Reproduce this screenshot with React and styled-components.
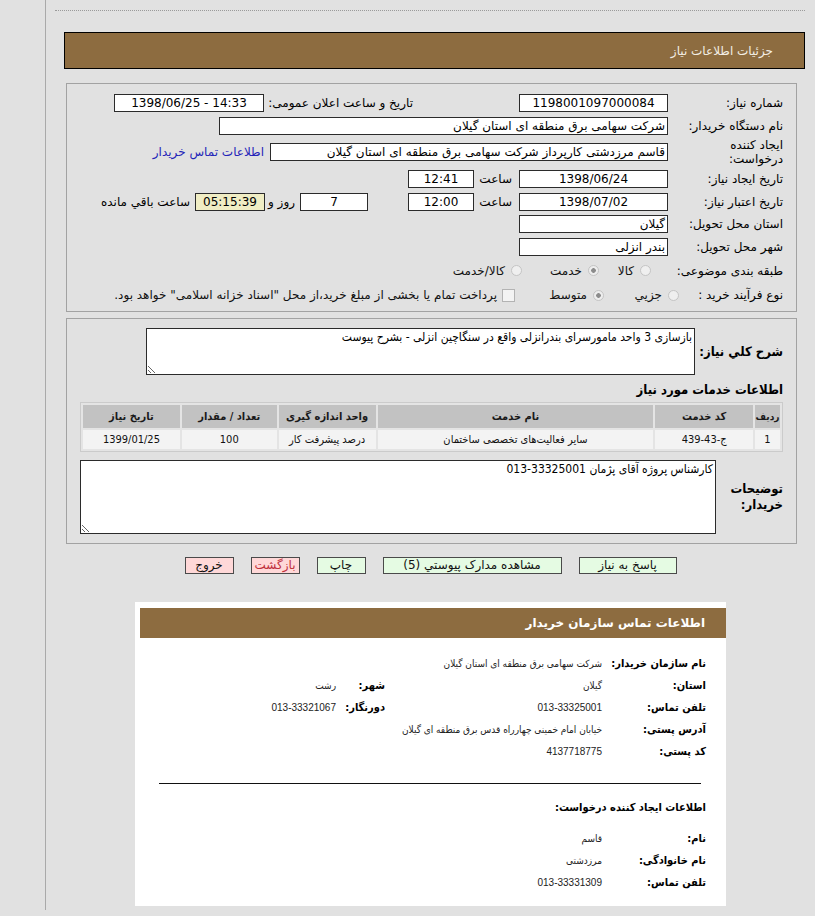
import React from "react";
import styled, { createGlobalStyle } from "styled-components";

const GlobalStyle = createGlobalStyle`
  html, body {
    margin: 0;
    padding: 0;
    background: #e1e1e1;
  }
  body {
    font-family: "DejaVu Sans", Tahoma, sans-serif;
    font-size: 12px;
    color: #000;
  }
`;

const Page = styled.div`
  display: flex;
  height: 916px;
  overflow: hidden;
`;

const Gutter = styled.div`
  width: 45px;
  height: 910px;
  flex-shrink: 0;
  border-right: 1px solid #a9a9a9;
`;

const Main = styled.div`
  flex: 1;
  direction: rtl;
  display: flex;
  flex-direction: column;
`;

const DottedRule = styled.div`
  margin: 10px 10px 0 9px;
  border-top: 1px dotted #9a9a9a;
`;

const TitleBar = styled.div`
  margin: 21px 10px 0 18px;
  height: 35px;
  border: 1px solid #000;
  background: #8d6c40;
  color: #f3eee4;
  display: flex;
  align-items: center;
  padding-right: 31px;
  font-size: 12px;
`;

const Box = styled.div`
  margin: ${(p) => p.$top}px 18px 0 20px;
  border: 1px solid #a2a2a2;
  padding: ${(p) => p.$pad};
  display: flex;
  flex-direction: column;
`;

const Row = styled.div`
  display: flex;
  align-items: center;
  height: ${(p) => p.$h}px;
  margin-top: ${(p) => p.$top || 0}px;
`;

const Label = styled.div`
  width: ${(p) => p.$w || 115}px;
  flex-shrink: 0;
  white-space: nowrap;
  line-height: ${(p) => (p.$bold ? 16 : 14)}px;
  font-family: ${(p) =>
    p.$bold ? `"DejaVu Sans Condensed", "DejaVu Sans", sans-serif` : "inherit"};
  font-weight: ${(p) => (p.$bold ? "bold" : "normal")};
  font-size: ${(p) => (p.$bold ? 13 : 12)}px;
  margin-right: ${(p) => p.$mr || 0}px;
`;

const Field = styled.div`
  width: ${(p) => p.$w}px;
  height: 18px;
  box-sizing: border-box;
  border: 1px solid #2b2b2b;
  background: ${(p) => p.$bg || "#fff"};
  text-align: ${(p) => p.$align || "center"};
  direction: ${(p) => p.$dir || "rtl"};
  line-height: 16px;
  padding: 0 2px;
  margin-right: ${(p) => p.$mr || 0}px;
  white-space: nowrap;
  overflow: hidden;
  flex-shrink: 0;
`;

const Caption = styled.span`
  width: ${(p) => (p.$w ? `${p.$w}px` : "auto")};
  padding-right: ${(p) => p.$pr || 0}px;
  box-sizing: border-box;
  white-space: nowrap;
  flex-shrink: 0;
`;

const Link = styled.a`
  margin-right: 6px;
  color: #2424b8;
  text-decoration: none;
  white-space: nowrap;
`;

const Option = styled.label`
  display: flex;
  align-items: center;
  width: ${(p) => (p.$w ? `${p.$w}px` : "auto")};
  padding-right: ${(p) => p.$pr || 0}px;
  box-sizing: border-box;
  white-space: nowrap;
  flex-shrink: 0;
  color: #111;
`;

const Radio = styled.span`
  width: 11px;
  height: 11px;
  box-sizing: border-box;
  border-radius: 50%;
  border: 1px solid #c4c4c4;
  background: ${(p) =>
    p.$on
      ? "radial-gradient(circle, #8c8c8c 0 2px, #ededed 2.6px)"
      : "#efefef"};
  margin-left: 6px;
  flex-shrink: 0;
`;

const Check = styled.span`
  width: 13px;
  height: 13px;
  box-sizing: border-box;
  border: 1px solid #b3b3b3;
  background: #f3f3f3;
  margin-left: 5px;
  flex-shrink: 0;
`;

const TextBlock = styled.textarea`
  width: ${(p) => p.$w}px;
  height: ${(p) => p.$h}px;
  box-sizing: border-box;
  border: 1px solid #2b2b2b;
  background: #fff;
  font-family: "DejaVu Sans Condensed", "DejaVu Sans", sans-serif;
  font-size: 12px;
  line-height: 15px;
  padding: 1px 2px;
  margin: 0;
  direction: rtl;
  flex-shrink: 0;
  outline: none;
`;

const SectionHead = styled.div`
  margin-top: 8px;
  height: 14px;
  line-height: 14px;
  font-family: "DejaVu Sans Condensed", "DejaVu Sans", sans-serif;
  font-weight: bold;
  font-size: 13px;
`;

const Table = styled.table`
  margin-top: 5px;
  width: 703px;
  border: 1px solid #cbcbcb;
  border-spacing: 2px;
  background: #e4e4e4;
  font-family: "DejaVu Sans Condensed", "DejaVu Sans", sans-serif;
  font-size: 11px;
`;

const Th = styled.th`
  width: ${(p) => p.$w}px;
  height: 23px;
  padding: 0;
  background: #c2c2c2;
  font-weight: bold;
  font-size: ${(p) => (p.$w < 40 ? 10 : 11)}px;
  color: #1a1a1a;
  white-space: nowrap;
`;

const Td = styled.td`
  height: 19px;
  padding: 0;
  background: #f3f3f3;
  text-align: center;
  color: #111;
`;

const ButtonBar = styled.div`
  display: flex;
  justify-content: center;
  gap: 17px;
  margin-top: 13px;
`;

const Button = styled.button`
  width: ${(p) => p.$w}px;
  height: 17px;
  padding: 0;
  border: 1px solid #4a4a4a;
  background: ${(p) => (p.$tone === "red" ? "#ffd8d8" : "#e5fbe3")};
  color: ${(p) => (p.$accent ? "#c0303c" : "#111")};
  font-family: "DejaVu Sans", sans-serif;
  font-size: 12px;
  line-height: 15px;
  direction: rtl;
`;

const Panel = styled.div`
  align-self: center;
  width: 591px;
  margin-top: 28px;
  background: #fff;
  padding: 6px 0 13px 5px;
  box-sizing: border-box;
`;

const PanelHead = styled.div`
  height: 30px;
  background: #8d6c40;
  color: #fff;
  font-weight: bold;
  font-size: 12px;
  display: flex;
  align-items: center;
  padding-right: 21px;
`;

const InfoList = styled.div`
  margin-top: ${(p) => p.$top}px;
  padding-right: 20px;
  display: flex;
  flex-direction: column;
`;

const InfoRow = styled.div`
  display: flex;
  align-items: center;
  height: 22px;
`;

const InfoLabel = styled.div`
  width: ${(p) => p.$w}px;
  flex-shrink: 0;
  font-family: "DejaVu Sans Condensed", "DejaVu Sans", sans-serif;
  font-weight: bold;
  font-size: 11px;
  white-space: nowrap;
`;

const InfoValue = styled.div`
  width: ${(p) => (p.$w ? `${p.$w}px` : "auto")};
  flex-shrink: 0;
  font-family: "Liberation Sans", "DejaVu Sans Condensed", sans-serif;
  font-size: 10px;
  color: #222;
  white-space: nowrap;
`;

const Rule = styled.div`
  margin: 21px 25px 0 19px;
  border-top: 1px solid #111;
`;

const SubHead = styled.div`
  margin-top: 17px;
  padding-right: 20px;
  font-family: "DejaVu Sans Condensed", "DejaVu Sans", sans-serif;
  font-weight: bold;
  font-size: 11px;
  line-height: 14px;
`;

const services = [
  {
    idx: "1",
    code: "ج-43-439",
    name: "سایر فعالیت‌های تخصصی ساختمان",
    unit: "درصد پیشرفت کار",
    qty: "100",
    date: "1399/01/25",
  },
];

export default function App() {
  return (
    <>
      <GlobalStyle />
      <Page>
        <Gutter />
        <Main>
          <DottedRule />
          <TitleBar>جزئیات اطلاعات نیاز</TitleBar>

          <Box $top={14} $pad="8px 13px 4px 10px">
            <Row $h={22}>
              <Label>شماره نیاز:</Label>
              <Field $w={149}>1198001097000084</Field>
              <Label $w={149} $mr={106}>
                تاریخ و ساعت اعلان عمومی:
              </Label>
              <Field $w={150} $dir="ltr">
                1398/06/25 - 14:33
              </Field>
            </Row>
            <Row $h={24}>
              <Label>نام دستگاه خریدار:</Label>
              <Field $w={449} $align="right">
                شرکت سهامی برق منطقه ای استان گیلان
              </Field>
            </Row>
            <Row $h={28}>
              <Label>
                ایجاد کننده
                <br />
                درخواست:
              </Label>
              <Field $w={398} $align="right">
                قاسم  مرزدشتی کارپرداز شرکت سهامی برق منطقه ای استان گیلان
              </Field>
              <Link href="#">اطلاعات تماس خریدار</Link>
            </Row>
            <Row $h={25}>
              <Label>تاریخ ایجاد نیاز:</Label>
              <Field $w={149}>1398/06/24</Field>
              <Caption $w={45} $pr={7}>
                ساعت
              </Caption>
              <Field $w={66}>12:41</Field>
            </Row>
            <Row $h={21}>
              <Label>تاریخ اعتبار نیاز:</Label>
              <Field $w={149}>1398/07/02</Field>
              <Caption $w={45} $pr={7}>
                ساعت
              </Caption>
              <Field $w={66}>12:00</Field>
              <Field $w={68} $mr={40}>
                7
              </Field>
              <Caption $w={35} $pr={5}>
                روز و
              </Caption>
              <Field $w={70} $bg="#f0edc4">
                05:15:39
              </Field>
              <Caption $pr={5}>ساعت باقي مانده</Caption>
            </Row>
            <Row $h={23}>
              <Label>استان محل تحویل:</Label>
              <Field $w={149} $align="right">
                گیلان
              </Field>
            </Row>
            <Row $h={23}>
              <Label>شهر محل تحویل:</Label>
              <Field $w={149} $align="right">
                بندر انزلی
              </Field>
            </Row>
            <Row $h={25}>
              <Label>طبقه بندی موضوعی:</Label>
              <Option $w={69} $pr={17}>
                <Radio />
                کالا
              </Option>
              <Option $w={77}>
                <Radio $on />
                خدمت
              </Option>
              <Option>
                <Radio />
                کالا/خدمت
              </Option>
            </Row>
            <Row $h={24}>
              <Label $w={104}>نوع فرآیند خرید :</Label>
              <Option $w={75}>
                <Radio />
                جزیي
              </Option>
              <Option $w={89}>
                <Radio $on />
                متوسط
              </Option>
              <Option>
                <Check />
                پرداخت تمام یا بخشی از مبلغ خرید،از محل "اسناد خزانه اسلامی" خواهد بود.
              </Option>
            </Row>
          </Box>

          <Box $top={6} $pad="9px 13px 9px 13px">
            <Row $h={47}>
              <Label $w={88} $bold>
                شرح کلي نیاز:
              </Label>
              <TextBlock
                $w={549}
                $h={47}
                readOnly
                value="بازسازی 3 واحد مامورسرای بندرانزلی واقع در سنگاچین انزلی - بشرح پیوست"
              />
            </Row>
            <SectionHead>اطلاعات خدمات مورد نیاز</SectionHead>
            <Table>
              <thead>
                <tr>
                  <Th $w={25}>ردیف</Th>
                  <Th $w={98}>کد خدمت</Th>
                  <Th $w={277}>نام خدمت</Th>
                  <Th $w={97}>واحد اندازه گیری</Th>
                  <Th $w={95}>تعداد / مقدار</Th>
                  <Th $w={97}>تاریخ نیاز</Th>
                </tr>
              </thead>
              <tbody>
                {services.map((s) => (
                  <tr key={s.idx}>
                    <Td>{s.idx}</Td>
                    <Td>{s.code}</Td>
                    <Td>{s.name}</Td>
                    <Td>{s.unit}</Td>
                    <Td>{s.qty}</Td>
                    <Td>{s.date}</Td>
                  </tr>
                ))}
              </tbody>
            </Table>
            <Row $h={74} $top={8}>
              <Label $w={67} $bold>
                توضیحات
                <br />
                خریدار:
              </Label>
              <TextBlock
                $w={636}
                $h={74}
                readOnly
                value="کارشناس پروژه آقای پژمان 33325001-013"
              />
            </Row>
          </Box>

          <ButtonBar>
            <Button $w={98}>پاسخ به نیاز</Button>
            <Button $w={179}>مشاهده مدارک پیوستي (5)</Button>
            <Button $w={49}>چاپ</Button>
            <Button $w={49} $tone="red" $accent>
              بازگشت
            </Button>
            <Button $w={49} $tone="red">
              خروج
            </Button>
          </ButtonBar>

          <Panel>
            <PanelHead>اطلاعات تماس سازمان خریدار</PanelHead>
            <InfoList $top={14}>
              <InfoRow>
                <InfoLabel $w={104}>نام سازمان خریدار:</InfoLabel>
                <InfoValue>شرکت سهامی برق منطقه ای استان گیلان</InfoValue>
              </InfoRow>
              <InfoRow>
                <InfoLabel $w={104}>استان:</InfoLabel>
                <InfoValue $w={217}>گیلان</InfoValue>
                <InfoLabel $w={49}>شهر:</InfoLabel>
                <InfoValue>رشت</InfoValue>
              </InfoRow>
              <InfoRow>
                <InfoLabel $w={104}>تلفن تماس:</InfoLabel>
                <InfoValue $w={217}>013-33325001</InfoValue>
                <InfoLabel $w={49}>دورنگار:</InfoLabel>
                <InfoValue>013-33321067</InfoValue>
              </InfoRow>
              <InfoRow>
                <InfoLabel $w={104}>آدرس پستی:</InfoLabel>
                <InfoValue>خیابان امام خمینی  چهارراه قدس  برق منطقه ای گیلان</InfoValue>
              </InfoRow>
              <InfoRow>
                <InfoLabel $w={104}>کد پستی:</InfoLabel>
                <InfoValue>4137718775</InfoValue>
              </InfoRow>
            </InfoList>
            <Rule />
            <SubHead>اطلاعات ایجاد کننده درخواست:</SubHead>
            <InfoList $top={12}>
              <InfoRow>
                <InfoLabel $w={104}>نام:</InfoLabel>
                <InfoValue>قاسم</InfoValue>
              </InfoRow>
              <InfoRow>
                <InfoLabel $w={104}>نام خانوادگی:</InfoLabel>
                <InfoValue>مرزدشتی</InfoValue>
              </InfoRow>
              <InfoRow>
                <InfoLabel $w={104}>تلفن تماس:</InfoLabel>
                <InfoValue>013-33331309</InfoValue>
              </InfoRow>
            </InfoList>
          </Panel>
        </Main>
      </Page>
    </>
  );
}
